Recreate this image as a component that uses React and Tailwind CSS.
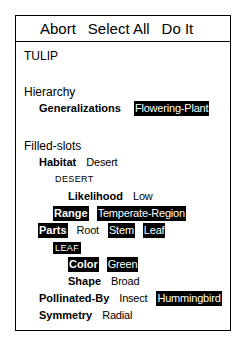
import React from "react";

const F = { fontFamily: '"Liberation Sans", Arial, sans-serif' };

function L({ children }) {
  return <span className="px-[1px] font-bold text-[11px]">{children}</span>;
}
function V({ children }) {
  return <span className="px-[1px] text-[11px] tracking-[-0.2px]">{children}</span>;
}
function BL({ children }) {
  return (
    <span className="px-[1px] h-[15px] leading-[15px] bg-black text-white font-bold text-[11px]">
      {children}
    </span>
  );
}
function BV({ children }) {
  return (
    <span className="px-[1px] h-[15px] leading-[15px] bg-black text-white text-[11px] tracking-[-0.2px]">
      {children}
    </span>
  );
}
function Row({ pl, children }) {
  return <div className={`flex items-center h-[17px] gap-[8px] ${pl}`}>{children}</div>;
}

export default function App() {
  return (
    <div className="w-[246px] h-[344px] bg-white pt-[15px] pl-[15px] text-black" style={F}>
      <div className="w-[216px] h-[316px] border border-black flex flex-col">
        <div className="h-[26px] border-b border-black flex items-center pl-[24px] gap-[12px] text-[15px] leading-none">
          <span>Abort</span>
          <span>Select All</span>
          <span>Do It</span>
        </div>
        <div className="flex flex-col pt-[5px]">
          <Row pl="pl-[7px]">
            <span className="px-[1px] text-[12px]">TULIP</span>
          </Row>
          <div className="h-[19px]" />
          <Row pl="pl-[7px]">
            <span className="px-[1px] text-[12px]">Hierarchy</span>
          </Row>
          <Row pl="pl-[22px]">
            <L>Generalizations</L>
            <span className="ml-[4px] flex">
              <BV>Flowering-Plant</BV>
            </span>
          </Row>
          <div className="h-[20px]" />
          <Row pl="pl-[7px]">
            <span className="px-[1px] text-[12px]">Filled-slots</span>
          </Row>
          <Row pl="pl-[22px]">
            <L>Habitat</L>
            <V>Desert</V>
          </Row>
          <Row pl="pl-[38px]">
            <span className="px-[1px] text-[9px] tracking-[0.4px]">DESERT</span>
          </Row>
          <Row pl="pl-[51px]">
            <L>Likelihood</L>
            <V>Low</V>
          </Row>
          <Row pl="pl-[37px]">
            <BL>Range</BL>
            <BV>Temperate-Region</BV>
          </Row>
          <Row pl="pl-[22px]">
            <BL>Parts</BL>
            <V>Root</V>
            <BV>Stem</BV>
            <BV>Leaf</BV>
          </Row>
          <Row pl="pl-[37px]">
            <span className="px-[2px] h-[12px] leading-[12px] bg-black text-white text-[9px] tracking-[0.4px]">
              LEAF
            </span>
          </Row>
          <Row pl="pl-[52px]">
            <BL>Color</BL>
            <BV>Green</BV>
          </Row>
          <Row pl="pl-[51px]">
            <L>Shape</L>
            <V>Broad</V>
          </Row>
          <Row pl="pl-[22px]">
            <L>Pollinated-By</L>
            <V>Insect</V>
            <BV>Hummingbird</BV>
          </Row>
          <Row pl="pl-[22px]">
            <L>Symmetry</L>
            <V>Radial</V>
          </Row>
        </div>
      </div>
    </div>
  );
}
